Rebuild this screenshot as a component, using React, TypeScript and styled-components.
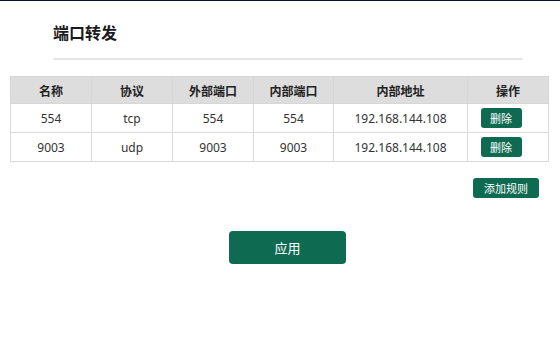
import React from "react";
import styled, { createGlobalStyle } from "styled-components";

const Global = createGlobalStyle`
  html, body { margin: 0; padding: 0; background: #fff; }
  body { font-family: "Noto Sans", "Noto Sans CJK SC", sans-serif; color: #333; }
`;

const GREEN = "#0e6a50";

const Page = styled.div`
  border-top: 1px solid #0a0f30;
  width: 560px;
  height: 349px;
  box-sizing: border-box;
`;

const Header = styled.div`
  margin: 0 37px 0 53px;
  padding-top: 20px;
`;

const Title = styled.h1`
  margin: 0;
  font-family: "Noto Sans CJK SC", sans-serif;
  font-size: 16px;
  font-weight: 700;
  line-height: 22px;
  color: #1a1a1a;
`;

const Divider = styled.div`
  margin-top: 15px;
  height: 2px;
  background: #e6e6e6;
`;

const Table = styled.table`
  margin: 16px 12px 0 10px;
  width: 538px;
  border-collapse: collapse;
  table-layout: fixed;
  font-size: 12px;
`;

const Col = styled.col<{ $w: number }>`
  width: ${(p) => p.$w}px;
`;

const Th = styled.th`
  height: 26px;
  padding: 0;
  background: #dddddd;
  border: 1px solid #d6d6d6;
  font-family: "Noto Sans CJK SC", sans-serif;
  font-weight: 700;
  font-size: 12px;
  color: #222;
  text-align: center;
`;

const Td = styled.td<{ $padRight?: number }>`
  height: 28px;
  padding: 0 ${(p) => p.$padRight ?? 0}px 0 0;
  border: 1px solid #dadada;
  text-align: center;
  color: #333;
`;

const SmallButton = styled.button<{ $w: number }>`
  width: ${(p) => p.$w}px;
  height: 20px;
  padding: 0;
  border: none;
  border-radius: 3px;
  background: ${GREEN};
  color: #fff;
  font-family: "Noto Sans CJK SC", sans-serif;
  font-size: 11px;
  line-height: 20px;
  vertical-align: middle;
  cursor: pointer;
`;

const ActionRow = styled.div`
  display: flex;
  justify-content: flex-end;
  margin: 16px 21px 0 0;
`;

const ApplyRow = styled.div`
  display: flex;
  justify-content: center;
  margin: 33px 38px 0 53px;
`;

const ApplyButton = styled.button`
  width: 117px;
  height: 33px;
  padding: 0;
  border: none;
  border-radius: 4px;
  background: ${GREEN};
  color: #fff;
  font-family: "Noto Sans CJK SC", sans-serif;
  font-size: 13px;
  cursor: pointer;
`;

const cols = [
  { label: "名称", w: 81 },
  { label: "协议", w: 81 },
  { label: "外部端口", w: 81 },
  { label: "内部端口", w: 80 },
  { label: "内部地址", w: 134 },
  { label: "操作", w: 81 },
];

const rows = [
  ["554", "tcp", "554", "554", "192.168.144.108"],
  ["9003", "udp", "9003", "9003", "192.168.144.108"],
];

export default function App() {
  return (
    <Page>
      <Global />
      <Header>
        <Title>端口转发</Title>
        <Divider />
      </Header>
      <Table>
        <colgroup>
          {cols.map((c) => (
            <Col key={c.label} $w={c.w} />
          ))}
        </colgroup>
        <thead>
          <tr>
            {cols.map((c) => (
              <Th key={c.label}>{c.label}</Th>
            ))}
          </tr>
        </thead>
        <tbody>
          {rows.map((r, i) => (
            <tr key={i}>
              {r.map((v, j) => (
                <Td key={j}>{v}</Td>
              ))}
              <Td $padRight={14}>
                <SmallButton $w={41}>删除</SmallButton>
              </Td>
            </tr>
          ))}
        </tbody>
      </Table>
      <ActionRow>
        <SmallButton $w={66}>添加规则</SmallButton>
      </ActionRow>
      <ApplyRow>
        <ApplyButton>应用</ApplyButton>
      </ApplyRow>
    </Page>
  );
}
